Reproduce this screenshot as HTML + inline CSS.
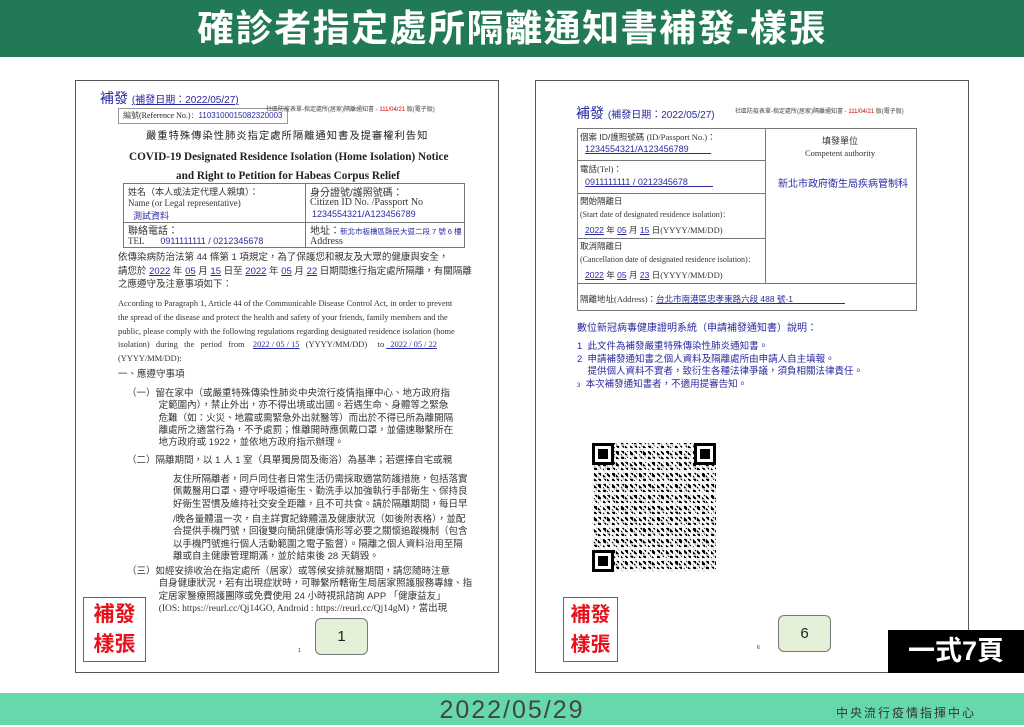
<!DOCTYPE html>
<html><head><meta charset="utf-8"><style>
*{margin:0;padding:0;box-sizing:border-box}
body{width:1024px;height:725px;position:relative;background:#fff;overflow:hidden;font-family:"Liberation Sans","Noto Sans CJK TC",sans-serif;color:#222}
.a{position:absolute;white-space:nowrap}
.hdr{left:0;top:0;width:1024px;height:57px;background:#217a55;color:#fff;font-size:37px;font-weight:bold;text-align:center;line-height:57px;letter-spacing:1.5px}
.foot{left:0;top:693px;width:1024px;height:32px;background:#66d9ac}
.doc{border:1px solid #555;position:absolute}
.b{color:#2a2aa0}
.u{text-decoration:underline}
.s{font-family:"Liberation Serif","Noto Serif CJK SC",serif}
.t{font-size:10px;color:#333}
.tbl{position:absolute;border:1px solid #777}
.stamp{position:absolute;border:1px solid #666;color:#e8101a;font-weight:bold;font-size:21px;line-height:30px;text-align:center;padding-top:2px}
.bub{position:absolute;background:#e4f0d8;border:1px solid #777;border-radius:6px;text-align:center;font-size:15px}
.qr{position:absolute;left:592px;top:443px;width:124px;height:129px;
background:
repeating-linear-gradient(90deg,rgba(255,255,255,.9) 0 2px,transparent 2px 5px,rgba(255,255,255,.8) 5px 6px,transparent 6px 9px),
repeating-linear-gradient(0deg,rgba(255,255,255,.9) 0 3px,transparent 3px 5px,rgba(255,255,255,.7) 5px 7px,transparent 7px 11px),
repeating-linear-gradient(45deg,#fff 0 2px,#000 2px 5px,#fff 5px 7px,#000 7px 9px);}
.fd{position:absolute;width:22px;height:22px;border:3px solid #000;background:#fff}
.fd::after{content:"";position:absolute;left:3px;top:3px;width:10px;height:10px;background:#000}
</style></head><body>
<div class="a hdr">確診者指定處所隔離通知書補發-樣張</div>

<!-- LEFT DOC -->
<div class="doc" style="left:75px;top:80px;width:424px;height:593px"></div>
<div class="a b" style="left:100px;top:88px;font-size:14px">補發 <span class="u" style="font-size:10px">(補發日期：2022/05/27)</span></div>
<div class="a" style="left:118px;top:108px;width:170px;height:16px;border:1px solid #999"></div>
<div class="a" style="left:123px;top:110px;font-size:8px"><span class="s">編號(Reference No.)：</span><span class="b">1103100015082320003</span></div>
<div class="a" style="left:266px;top:104px;font-size:6px;color:#444">社區防疫表單-指定處所(居家)隔離通知書 - <span style="color:#c00">111/04/21</span> 版(電子版)</div>
<div class="a" style="left:146px;top:127px;font-size:10.3px;letter-spacing:1px">嚴重特殊傳染性肺炎指定處所隔離通知書及提審權利告知</div>
<div class="a s" style="left:129px;top:151px;font-size:11.2px;font-weight:bold">COVID-19 Designated Residence Isolation (Home Isolation) Notice</div>
<div class="a s" style="left:176px;top:170px;font-size:11.2px;font-weight:bold">and Right to Petition for Habeas Corpus Relief</div>
<div class="tbl" style="left:123px;top:183px;width:342px;height:65px"></div>
<div class="a" style="left:305px;top:183px;width:1px;height:65px;background:#777"></div>
<div class="a" style="left:123px;top:222px;width:342px;height:1px;background:#777"></div>
<div class="a t" style="left:128px;top:185px;font-size:9px">姓名（本人或法定代理人親填）：</div>
<div class="a s t" style="left:128px;top:198px;font-size:9px">Name (or Legal representative)</div>
<div class="a b" style="left:133px;top:209px;font-size:9px">測試資料</div>
<div class="a t" style="left:310px;top:184px">身分證號/護照號碼：</div>
<div class="a s t" style="left:310px;top:197px">Citizen ID No. /Passport No</div>
<div class="a b" style="left:312px;top:209px;font-size:9px">1234554321/A123456789</div>
<div class="a t" style="left:128px;top:222px">聯絡電話：</div>
<div class="a s t" style="left:128px;top:236px;font-size:9px">TEL <span class="b" style="font-family:'Liberation Sans';margin-left:14px">0911111111 / 0212345678</span></div>
<div class="a t" style="left:310px;top:222px">地址：<span class="b" style="font-size:7.5px">新北市板橋區縣民大道二段 7 號 6 樓</span></div>
<div class="a s t" style="left:310px;top:236px">Address</div>
<div class="a" style="left:118px;top:251px;font-size:9.5px;line-height:13.5px;color:#333">依傳染病防治法第 44 條第 1 項規定，為了保護您和親友及大眾的健康與安全，<br>請您於 <span class="b u">2022</span> 年 <span class="b u">05</span> 月 <span class="b u">15</span> 日至 <span class="b u">2022</span> 年 <span class="b u">05</span> 月 <span class="b u">22</span> 日期間進行指定處所隔離，有關隔離<br>之應遵守及注意事項如下：</div>
<div class="a s" style="left:118px;top:297px;font-size:8.4px;line-height:13.8px;color:#333">According to Paragraph 1, Article 44 of the Communicable Disease Control Act, in order to prevent<br>the spread of the disease and protect the health and safety of your friends, family members and the<br>public, please comply with the following regulations regarding designated residence isolation (home<br>isolation)&nbsp;&nbsp;&nbsp;during&nbsp;&nbsp;&nbsp;the&nbsp;&nbsp;&nbsp;period&nbsp;&nbsp;&nbsp;from&nbsp;&nbsp;&nbsp;&nbsp;<span class="b u">2022 / 05 / 15</span>&nbsp;&nbsp;&nbsp;(YYYY/MM/DD)&nbsp;&nbsp;&nbsp;&nbsp;&nbsp;to&nbsp;<span class="b u">&nbsp;&nbsp;2022 / 05 / 22</span><br>(YYYY/MM/DD):</div>
<div class="a" style="left:118px;top:366px;font-size:9.5px;color:#333">一、應遵守事項</div>
<div class="a" style="left:127px;top:388px;font-size:9.5px;line-height:12.3px;color:#333">（一）留在家中（或嚴重特殊傳染性肺炎中央流行疫情指揮中心、地方政府指<br>&nbsp;&nbsp;&nbsp;&nbsp;&nbsp;&nbsp;&nbsp;&nbsp;&nbsp;&nbsp;&nbsp;&nbsp;定範圍內），禁止外出，亦不得出境或出國。若遇生命、身體等之緊急<br>&nbsp;&nbsp;&nbsp;&nbsp;&nbsp;&nbsp;&nbsp;&nbsp;&nbsp;&nbsp;&nbsp;&nbsp;危難（如：火災、地震或需緊急外出就醫等）而出於不得已所為離開隔<br>&nbsp;&nbsp;&nbsp;&nbsp;&nbsp;&nbsp;&nbsp;&nbsp;&nbsp;&nbsp;&nbsp;&nbsp;離處所之適當行為，不予處罰；惟離開時應佩戴口罩，並儘速聯繫所在<br>&nbsp;&nbsp;&nbsp;&nbsp;&nbsp;&nbsp;&nbsp;&nbsp;&nbsp;&nbsp;&nbsp;&nbsp;地方政府或 1922，並依地方政府指示辦理。</div>
<div class="a" style="left:127px;top:452px;font-size:9.5px;color:#333">（二）隔離期間，以 1 人 1 室（具單獨房間及衛浴）為基準；若選擇自宅或親</div>
<div class="a" style="left:173px;top:474px;font-size:9.5px;line-height:12.3px;color:#333">友住所隔離者，同戶同住者日常生活仍需採取適當防護措施，包括落實<br>佩戴醫用口罩、遵守呼吸道衛生、勤洗手以加強執行手部衛生、保持良<br>好衛生習慣及維持社交安全距離，且不可共食。請於隔離期間，每日早</div>
<div class="a" style="left:173px;top:514px;font-size:9.5px;line-height:12.3px;color:#333">/晚各量體溫一次，自主詳實記錄體溫及健康狀況（如後附表格），並配<br>合提供手機門號，回復雙向簡訊健康情形等必要之關懷追蹤機制（包含<br>以手機門號進行個人活動範圍之電子監督）。隔離之個人資料沿用至隔<br>離或自主健康管理期滿，並於結束後 28 天銷毀。</div>
<div class="a" style="left:127px;top:566px;font-size:9.5px;line-height:12.3px;color:#333">（三）如經安排收治在指定處所（居家）或等候安排就醫期間，請您隨時注意<br>&nbsp;&nbsp;&nbsp;&nbsp;&nbsp;&nbsp;&nbsp;&nbsp;&nbsp;&nbsp;&nbsp;&nbsp;自身健康狀況，若有出現症狀時，可聯繫所轄衛生局居家照護服務專線、指<br>&nbsp;&nbsp;&nbsp;&nbsp;&nbsp;&nbsp;&nbsp;&nbsp;&nbsp;&nbsp;&nbsp;&nbsp;定居家醫療照護團隊或免費使用 24 小時視訊諮詢 APP 「健康益友」<br>&nbsp;&nbsp;&nbsp;&nbsp;&nbsp;&nbsp;&nbsp;&nbsp;&nbsp;&nbsp;&nbsp;&nbsp;<span class="s">(IOS: https://reurl.cc/Qj14GO, Android : https://reurl.cc/Qj14gM)</span>，當出現</div>
<div class="stamp" style="left:83px;top:597px;width:63px;height:65px">補發<br>樣張</div>
<div class="bub" style="left:315px;top:618px;width:53px;height:37px;line-height:35px">1</div>
<div class="a" style="left:298px;top:648px;font-size:5px">1</div>

<!-- RIGHT DOC -->
<div class="doc" style="left:535px;top:80px;width:434px;height:593px"></div>
<div class="a b" style="left:576px;top:103px;font-size:14px">補發 <span style="font-size:10px">(補發日期：2022/05/27)</span></div>
<div class="a" style="left:735px;top:106px;font-size:6px;color:#444">社區防疫表單-指定處所(居家)隔離通知書 - <span style="color:#c00">111/04/21</span> 版(電子版)</div>
<div class="tbl" style="left:577px;top:128px;width:340px;height:183px"></div>
<div class="a" style="left:765px;top:128px;width:1px;height:155px;background:#777"></div>
<div class="a" style="left:577px;top:160px;width:188px;height:1px;background:#777"></div>
<div class="a" style="left:577px;top:193px;width:188px;height:1px;background:#777"></div>
<div class="a" style="left:577px;top:238px;width:188px;height:1px;background:#777"></div>
<div class="a" style="left:577px;top:283px;width:340px;height:1px;background:#777"></div>
<div class="a t" style="left:580px;top:131px;font-size:8.5px">個案 ID/護照號碼 <span class="s">(ID/Passport No.)</span>：</div>
<div class="a b u" style="left:585px;top:144px;font-size:9px">1234554321/A123456789&nbsp;&nbsp;&nbsp;&nbsp;&nbsp;&nbsp;&nbsp;&nbsp;&nbsp;</div>
<div class="a t" style="left:580px;top:163px;font-size:8.5px">電話<span class="s">(Tel)</span>：</div>
<div class="a b u" style="left:585px;top:177px;font-size:9px">0911111111 / 0212345678&nbsp;&nbsp;&nbsp;&nbsp;&nbsp;&nbsp;&nbsp;&nbsp;&nbsp;&nbsp;</div>
<div class="a t" style="left:580px;top:195px;font-size:8.5px">開始隔離日</div>
<div class="a s t" style="left:580px;top:209px;font-size:8px">(Start date of designated residence isolation)：</div>
<div class="a t" style="left:585px;top:224px;font-size:8.5px"><span class="b u">2022</span> 年 <span class="b u">05</span> 月 <span class="b u">15</span> 日<span class="s">(YYYY/MM/DD)</span></div>
<div class="a t" style="left:580px;top:240px;font-size:8.5px">取消隔離日</div>
<div class="a s t" style="left:580px;top:254px;font-size:8px">(Cancellation date of designated residence isolation)：</div>
<div class="a t" style="left:585px;top:269px;font-size:8.5px"><span class="b u">2022</span> 年 <span class="b u">05</span> 月 <span class="b u">23</span> 日<span class="s">(YYYY/MM/DD)</span></div>
<div class="a t" style="left:580px;top:293px;font-size:8.5px">隔離地址<span class="s">(Address)</span>：<span class="b u">台北市南港區忠孝東路六段 488 號-1&nbsp;&nbsp;&nbsp;&nbsp;&nbsp;&nbsp;&nbsp;&nbsp;&nbsp;&nbsp;&nbsp;&nbsp;&nbsp;&nbsp;&nbsp;&nbsp;&nbsp;&nbsp;&nbsp;&nbsp;&nbsp;&nbsp;</span></div>
<div class="a t" style="left:822px;top:134px;font-size:9px">填發單位</div>
<div class="a s t" style="left:805px;top:148px;font-size:8.5px">Competent authority</div>
<div class="a b" style="left:778px;top:175px;font-size:10px">新北市政府衛生局疾病管制科</div>
<div class="a b" style="left:577px;top:319px;font-size:10px">數位新冠病毒健康證明系統（申請補發通知書）說明：</div>
<div class="a b" style="left:577px;top:341px;font-size:9.5px;line-height:12.5px">1&nbsp;&nbsp;此文件為補發嚴重特殊傳染性肺炎通知書。<br>2&nbsp;&nbsp;申請補發通知書之個人資料及隔離處所由申請人自主填報。<br>&nbsp;&nbsp;&nbsp;&nbsp;提供個人資料不實者，致衍生各種法律爭議，須負相關法律責任。<br><span style="font-size:6px">3</span>&nbsp;&nbsp;本次補發通知書者，不適用提審告知。</div>
<div class="qr"></div>
<div class="fd" style="left:592px;top:443px"></div>
<div class="fd" style="left:694px;top:443px"></div>
<div class="fd" style="left:592px;top:550px"></div>
<div class="stamp" style="left:563px;top:597px;width:55px;height:65px;font-size:20px">補發<br>樣張</div>
<div class="bub" style="left:778px;top:615px;width:53px;height:37px;line-height:35px">6</div>
<div class="a" style="left:757px;top:645px;font-size:5px">6</div>
<div class="a" style="left:888px;top:630px;width:136px;height:43px;background:#000;color:#fff;font-size:27px;font-weight:bold;text-align:center;line-height:43px">一式7頁</div>

<div class="a foot"></div>
<div class="a" style="left:0;top:693px;width:1024px;text-align:center;font-size:25px;line-height:34px;color:#444;letter-spacing:2px">2022/05/29</div>
<div class="a" style="left:836px;top:704px;font-size:12px;color:#333;letter-spacing:2px">中央流行疫情指揮中心</div>
</body></html>
